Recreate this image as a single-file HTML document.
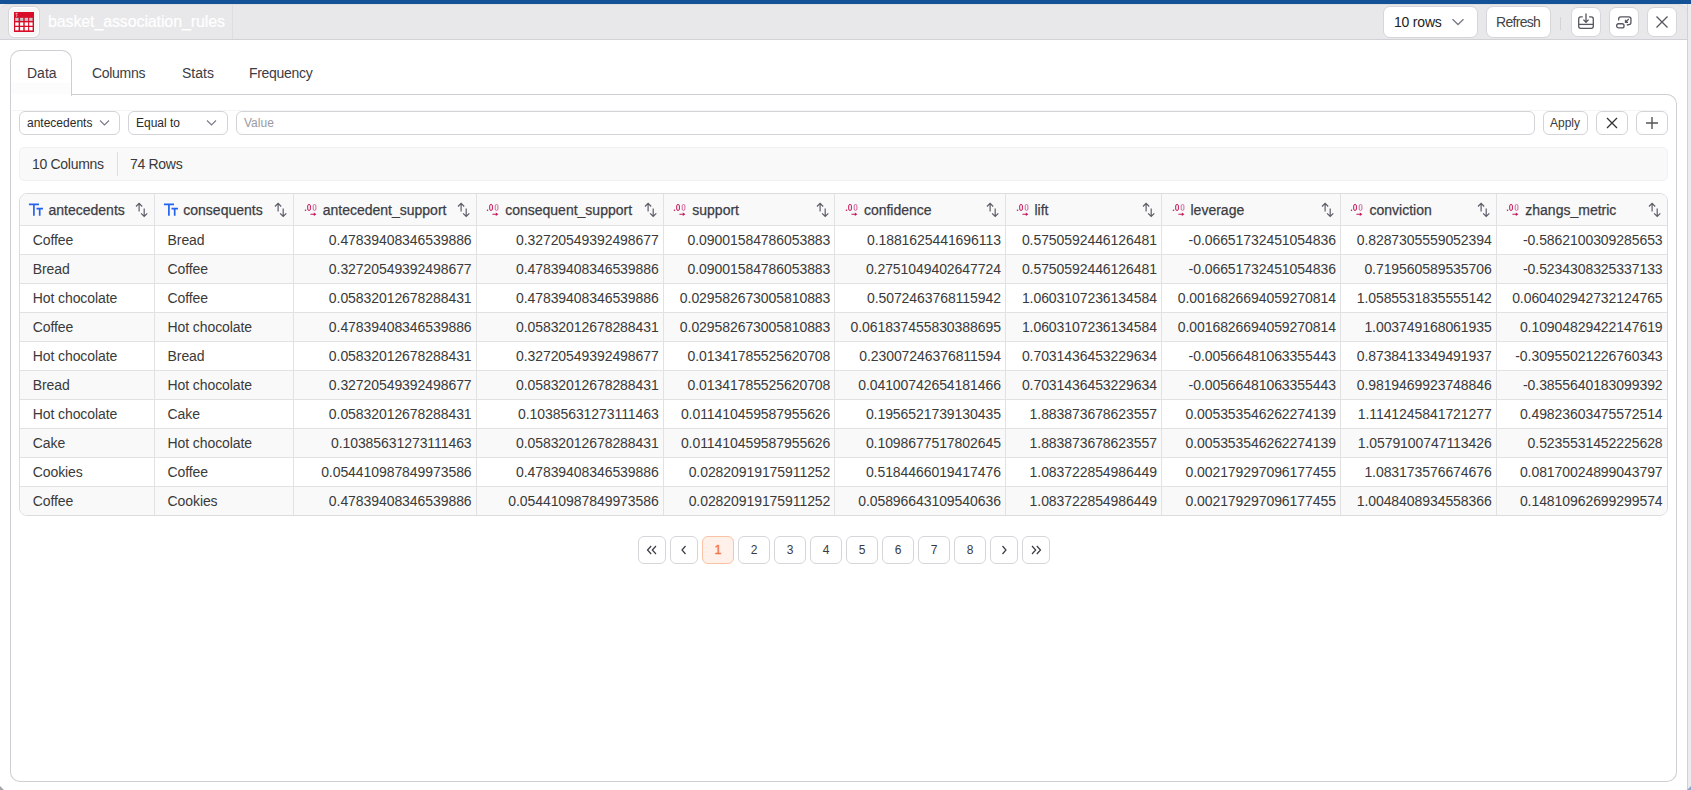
<!DOCTYPE html>
<html><head><meta charset="utf-8">
<style>
*{box-sizing:border-box;margin:0;padding:0}
html,body{width:1691px;height:790px;overflow:hidden;background:#fff;font-family:"Liberation Sans",sans-serif;color:#3a3a3a}
.a{position:absolute}
#blue{left:0;top:0;width:1691px;height:4px;background:#145298}
#strip{left:1687px;top:4px;width:4px;height:786px;background:#ececee;border-left:1px solid #d2d2d6}
#hdr{left:0;top:4px;width:1688px;height:36px;background:#e8e8ea;border:1px solid #e2e2e5;border-top-color:#dedee1;border-left:none;border-bottom:1px solid #d2d2d6;border-radius:8px 10px 0 0}
#corner{left:0;top:4px;width:12px;height:12px;background:#ececee}
#corner2{left:1676px;top:4px;width:15px;height:14px;background:#ececee}
.btn{position:absolute;background:#fff;border:1px solid #d6d6da;border-radius:7px}
.t{position:absolute;white-space:nowrap;line-height:16px}
#panel{left:10px;top:103px;width:1667px;height:679px;border:1px solid #cfcfd3;border-top:none;border-radius:0 0 10px 10px}
#tabline{left:71px;top:94px;width:1606px;height:20px;border-top:1px solid #cfcfd3;border-right:1px solid #cfcfd3;border-radius:0 10px 0 0}
#tab{left:10px;top:50px;width:62px;height:46px;border:1px solid #cfcfd3;border-bottom:none;border-radius:10px 10px 0 0;background:#fff}
.inp{position:absolute;top:111px;height:24px;border:1px solid #d4d4d8;border-radius:6px;background:#fff}
#stats{left:19px;top:147px;width:1649px;height:34px;background:#f9f9f9;border:1px solid #f1f1f2;border-radius:5px}
#tbl{left:19px;top:193px;width:1649px;height:323px;border:1px solid #dcdcdf;border-radius:8px;overflow:hidden}
.row{position:absolute;left:0;width:1647px;height:29px;border-top:1px solid #e2e2e5}
.g{background:#f9f9f9}
.vl{position:absolute;top:0;width:1px;height:321px;background:#e2e2e5}
.c{position:absolute;top:0;height:28px;line-height:28px;font-size:14px;white-space:nowrap;color:#3a3a3a}
.r{text-align:right}
.h{position:absolute;top:8px;font-size:14px;line-height:16px;color:#3c3c44;-webkit-text-stroke:0.25px #3c3c44;white-space:nowrap}
.pg{position:absolute;top:536px;height:28px;border:1px solid #d6d6da;border-radius:6px;font-size:12px;line-height:26px;text-align:center;color:#3a3a3a}
</style></head><body>
<div id="blue" class="a"></div>
<div id="corner" class="a"></div><div id="corner2" class="a"></div>
<div id="hdr" class="a"></div>
<div id="strip" class="a"></div>
<!-- icon box -->
<div class="a" style="left:8px;top:6px;width:32px;height:32px;background:#f7f7f8;border:1px solid #d6d6da;box-shadow:inset 0 0 0 1px #fff;border-radius:6px"></div>
<svg class="a" style="left:14px;top:12px" width="20" height="20" viewBox="0 0 20 20">
<rect x="0" y="0" width="20" height="20" fill="#d90b26"/>
<g fill="#fff"><rect x="1.2" y="10.4" width="3.4" height="3.3"/><rect x="6.1" y="10.4" width="3.2" height="3.3"/><rect x="10.7" y="10.4" width="3.4" height="3.3"/><rect x="15.2" y="10.4" width="3.4" height="3.3"/>
<rect x="1.2" y="15" width="3.4" height="3.4"/><rect x="6.1" y="15" width="3.2" height="3.4"/><rect x="10.7" y="15" width="3.4" height="3.4"/><rect x="15.2" y="15" width="3.4" height="3.4"/></g>
<g fill="#c6c8ca"><rect x="1.2" y="5.8" width="3.4" height="3.1"/><rect x="6.1" y="5.8" width="3.2" height="3.1"/><rect x="10.7" y="5.8" width="3.4" height="3.1"/><rect x="15.2" y="5.8" width="3.4" height="3.1"/></g>
<path d="M1.6 1.3h2.2M2.6 1.3Q1.4 2.6 2.8 3Q3.8 3.6 2 4.6" stroke="#f6c4cc" stroke-width="0.8" fill="none"/>
</svg>
<div class="t" style="left:48px;top:13px;font-size:16px;line-height:18px;color:#fff;letter-spacing:-0.12px;-webkit-text-stroke:0.2px #fff">basket_association_rules</div>
<div class="a" style="left:232px;top:5px;width:1px;height:34px;background:#dedee1"></div>

<!-- right header controls -->
<div class="btn" style="left:1383px;top:6px;width:95px;height:32px"></div>
<div class="t" style="left:1394px;top:14px;font-size:14px;color:#222;letter-spacing:-0.2px">10 rows</div>
<svg class="a" style="left:1451px;top:18px" width="14" height="8" viewBox="0 0 14 8"><path d="M1.5 1.2L7 6.5L12.5 1.2" fill="none" stroke="#7a7a88" stroke-width="1.3"/></svg>
<div class="btn" style="left:1486px;top:6px;width:65px;height:32px"></div>
<div class="t" style="left:1496px;top:14px;font-size:14px;color:#444;letter-spacing:-0.7px">Refresh</div>
<div class="a" style="left:1560px;top:17px;width:1px;height:13px;background:#d4d4d8"></div>
<div class="btn" style="left:1571px;top:7px;width:30px;height:30px"></div>
<svg class="a" style="left:1576px;top:12px" width="20" height="20" viewBox="0 0 20 20"><g fill="none" stroke="#55565f" stroke-width="1.3"><path d="M10 1.5v8.8M7.4 7.6L10 10.3L12.6 7.6"/><path d="M6.7 4.8H4.6Q2.7 4.8 2.7 7v7.3Q2.7 16.4 4.7 16.4h10.6Q17.3 16.4 17.3 14.3V7Q17.3 4.8 15.4 4.8h-2.3"/><path d="M2.7 12.4h14.6"/></g></svg>
<div class="btn" style="left:1609px;top:7px;width:30px;height:30px"></div>
<svg class="a" style="left:1614px;top:12px" width="20" height="20" viewBox="0 0 20 20"><g fill="none" stroke="#55565f" stroke-width="1.3"><path d="M4.65 8.6V7Q4.65 4.85 6.8 4.85h8Q16.95 4.85 16.95 7v3.6Q16.95 12.5 15 12.6l-2.2 .4"/><rect x="2.65" y="11.75" width="7.4" height="4.2" rx="2"/><path d="M14.8 6.9L11.6 10.2M11.5 7.8v2.6h2.6"/></g></svg>
<div class="btn" style="left:1647px;top:7px;width:30px;height:30px"></div>
<svg class="a" style="left:1655px;top:15px" width="14" height="14" viewBox="0 0 14 14"><path d="M1.5 1.5L12.5 12.5M12.5 1.5L1.5 12.5" stroke="#55565f" stroke-width="1.3"/></svg>

<!-- panel & tabs -->
<div id="panel" class="a"></div>
<div class="a" style="left:10px;top:90px;width:1px;height:14px;background:#cfcfd3"></div>
<div id="tabline" class="a"></div>
<div id="tab" class="a"></div>
<div class="a" style="left:11px;top:83px;width:60px;height:11px;background:#fcfcfc"></div>
<div class="a" style="left:11px;top:110px;width:1656px;height:1px;background:#f5f5f6"></div>
<div class="t" style="left:27px;top:65px;font-size:14px;color:#3c3c44">Data</div>
<div class="t" style="left:92px;top:65px;font-size:14px;color:#3c3c44;letter-spacing:-0.3px">Columns</div>
<div class="t" style="left:182px;top:65px;font-size:14px;color:#3c3c44">Stats</div>
<div class="t" style="left:249px;top:65px;font-size:14px;color:#3c3c44;letter-spacing:-0.3px">Frequency</div>

<!-- filter row -->
<div class="inp" style="left:19px;width:101px"></div>
<div class="t" style="left:27px;top:115px;font-size:12px;color:#2a2a2a">antecedents</div>
<svg class="a" style="left:99px;top:119px" width="11" height="8" viewBox="0 0 11 8"><path d="M1 1.5L5.5 6L10 1.5" fill="none" stroke="#7a7a88" stroke-width="1.1"/></svg>
<div class="inp" style="left:128px;width:100px"></div>
<div class="t" style="left:136px;top:115px;font-size:12px;color:#2a2a2a">Equal to</div>
<svg class="a" style="left:206px;top:119px" width="11" height="8" viewBox="0 0 11 8"><path d="M1 1.5L5.5 6L10 1.5" fill="none" stroke="#7a7a88" stroke-width="1.1"/></svg>
<div class="inp" style="left:236px;width:1299px"></div>
<div class="t" style="left:244px;top:115px;font-size:12px;color:#9a9aa2">Value</div>
<div class="inp" style="left:1543px;width:45px"></div>
<div class="t" style="left:1550px;top:115px;font-size:12px;color:#3a3a3a">Apply</div>
<div class="inp" style="left:1596px;width:32px"></div>
<svg class="a" style="left:1606px;top:117px" width="12" height="12" viewBox="0 0 12 12"><path d="M1 1L11 11M11 1L1 11" stroke="#333" stroke-width="1.3"/></svg>
<div class="inp" style="left:1636px;width:32px"></div>
<svg class="a" style="left:1645px;top:116px" width="14" height="14" viewBox="0 0 14 14"><path d="M7 1v12M1 7h12" stroke="#555" stroke-width="1.4"/></svg>

<!-- stats -->
<div id="stats" class="a"></div>
<div class="t" style="left:32px;top:156px;font-size:14px;color:#3a3a3a;letter-spacing:-0.3px">10 Columns</div>
<div class="a" style="left:117px;top:152px;width:1px;height:24px;background:#e0e0e3"></div>
<div class="t" style="left:130px;top:156px;font-size:14px;color:#3a3a3a;letter-spacing:-0.3px">74 Rows</div>

<!-- table -->
<div id="tbl" class="a">
<div class="a g" style="left:0;top:0;width:1647px;height:31px"></div>
<div class="row" style="top:31px"></div>
<div class="row g" style="top:60px"></div>
<div class="row" style="top:89px"></div>
<div class="row g" style="top:118px"></div>
<div class="row" style="top:147px"></div>
<div class="row g" style="top:176px"></div>
<div class="row" style="top:205px"></div>
<div class="row g" style="top:234px"></div>
<div class="row" style="top:263px"></div>
<div class="row g" style="top:292px"></div>
<div class="vl" style="left:134px"></div>
<div class="vl" style="left:273px"></div>
<div class="vl" style="left:456px"></div>
<div class="vl" style="left:643px"></div>
<div class="vl" style="left:814px"></div>
<div class="vl" style="left:985px"></div>
<div class="vl" style="left:1141px"></div>
<div class="vl" style="left:1320px"></div>
<div class="vl" style="left:1476px"></div>
<svg class="a" style="left:8px;top:8px" width="16" height="16" viewBox="0 0 16 16"><path d="M0.9 2.4H11M5.9 2.4V13.8M8.5 6.6H15M11.7 6.6V13.8" stroke="#2462f0" stroke-width="1.7" fill="none"/></svg>
<div class="h" style="left:28.5px">antecedents</div>
<svg class="a" style="left:115px;top:8px" width="14" height="16" viewBox="0 0 14 16"><g fill="none" stroke="#5c5d68" stroke-width="1.2"><path d="M4.1 1.4v8M1 4.5L4.1 1.4L7.2 4.5"/><path d="M9.2 6.4v8M6.1 11.3L9.2 14.4L12.3 11.3"/></g></svg>
<svg class="a" style="left:143px;top:8px" width="16" height="16" viewBox="0 0 16 16"><path d="M0.9 2.4H11M5.9 2.4V13.8M8.5 6.6H15M11.7 6.6V13.8" stroke="#2462f0" stroke-width="1.7" fill="none"/></svg>
<div class="h" style="left:163.3px">consequents</div>
<svg class="a" style="left:254px;top:8px" width="14" height="16" viewBox="0 0 14 16"><g fill="none" stroke="#5c5d68" stroke-width="1.2"><path d="M4.1 1.4v8M1 4.5L4.1 1.4L7.2 4.5"/><path d="M9.2 6.4v8M6.1 11.3L9.2 14.4L12.3 11.3"/></g></svg>
<svg class="a" style="left:284px;top:8px" width="14" height="16" viewBox="0 0 14 16"><circle cx="1.5" cy="8.2" r="0.8" fill="#c2185b"/><rect x="3.7" y="2.5" width="2.7" height="5.9" rx="1.35" fill="none" stroke="#c2185b" stroke-width="1"/><rect x="9.2" y="2.5" width="2.7" height="5.9" rx="1.35" fill="none" stroke="#d2669a" stroke-width="1"/><path d="M6.4 12.3h4" stroke="#c2185b" stroke-width="1.1"/><path d="M9.8 10.5L12.4 12.3L9.8 14.1z" fill="#c2185b"/></svg>
<div class="h" style="left:302.7px">antecedent_support</div>
<svg class="a" style="left:437px;top:8px" width="14" height="16" viewBox="0 0 14 16"><g fill="none" stroke="#5c5d68" stroke-width="1.2"><path d="M4.1 1.4v8M1 4.5L4.1 1.4L7.2 4.5"/><path d="M9.2 6.4v8M6.1 11.3L9.2 14.4L12.3 11.3"/></g></svg>
<svg class="a" style="left:466px;top:8px" width="14" height="16" viewBox="0 0 14 16"><circle cx="1.5" cy="8.2" r="0.8" fill="#c2185b"/><rect x="3.7" y="2.5" width="2.7" height="5.9" rx="1.35" fill="none" stroke="#c2185b" stroke-width="1"/><rect x="9.2" y="2.5" width="2.7" height="5.9" rx="1.35" fill="none" stroke="#d2669a" stroke-width="1"/><path d="M6.4 12.3h4" stroke="#c2185b" stroke-width="1.1"/><path d="M9.8 10.5L12.4 12.3L9.8 14.1z" fill="#c2185b"/></svg>
<div class="h" style="left:485.2px">consequent_support</div>
<svg class="a" style="left:624px;top:8px" width="14" height="16" viewBox="0 0 14 16"><g fill="none" stroke="#5c5d68" stroke-width="1.2"><path d="M4.1 1.4v8M1 4.5L4.1 1.4L7.2 4.5"/><path d="M9.2 6.4v8M6.1 11.3L9.2 14.4L12.3 11.3"/></g></svg>
<svg class="a" style="left:653px;top:8px" width="14" height="16" viewBox="0 0 14 16"><circle cx="1.5" cy="8.2" r="0.8" fill="#c2185b"/><rect x="3.7" y="2.5" width="2.7" height="5.9" rx="1.35" fill="none" stroke="#c2185b" stroke-width="1"/><rect x="9.2" y="2.5" width="2.7" height="5.9" rx="1.35" fill="none" stroke="#d2669a" stroke-width="1"/><path d="M6.4 12.3h4" stroke="#c2185b" stroke-width="1.1"/><path d="M9.8 10.5L12.4 12.3L9.8 14.1z" fill="#c2185b"/></svg>
<div class="h" style="left:672.3px">support</div>
<svg class="a" style="left:796px;top:8px" width="14" height="16" viewBox="0 0 14 16"><g fill="none" stroke="#5c5d68" stroke-width="1.2"><path d="M4.1 1.4v8M1 4.5L4.1 1.4L7.2 4.5"/><path d="M9.2 6.4v8M6.1 11.3L9.2 14.4L12.3 11.3"/></g></svg>
<svg class="a" style="left:825px;top:8px" width="14" height="16" viewBox="0 0 14 16"><circle cx="1.5" cy="8.2" r="0.8" fill="#c2185b"/><rect x="3.7" y="2.5" width="2.7" height="5.9" rx="1.35" fill="none" stroke="#c2185b" stroke-width="1"/><rect x="9.2" y="2.5" width="2.7" height="5.9" rx="1.35" fill="none" stroke="#d2669a" stroke-width="1"/><path d="M6.4 12.3h4" stroke="#c2185b" stroke-width="1.1"/><path d="M9.8 10.5L12.4 12.3L9.8 14.1z" fill="#c2185b"/></svg>
<div class="h" style="left:843.9px">confidence</div>
<svg class="a" style="left:966px;top:8px" width="14" height="16" viewBox="0 0 14 16"><g fill="none" stroke="#5c5d68" stroke-width="1.2"><path d="M4.1 1.4v8M1 4.5L4.1 1.4L7.2 4.5"/><path d="M9.2 6.4v8M6.1 11.3L9.2 14.4L12.3 11.3"/></g></svg>
<svg class="a" style="left:996px;top:8px" width="14" height="16" viewBox="0 0 14 16"><circle cx="1.5" cy="8.2" r="0.8" fill="#c2185b"/><rect x="3.7" y="2.5" width="2.7" height="5.9" rx="1.35" fill="none" stroke="#c2185b" stroke-width="1"/><rect x="9.2" y="2.5" width="2.7" height="5.9" rx="1.35" fill="none" stroke="#d2669a" stroke-width="1"/><path d="M6.4 12.3h4" stroke="#c2185b" stroke-width="1.1"/><path d="M9.8 10.5L12.4 12.3L9.8 14.1z" fill="#c2185b"/></svg>
<div class="h" style="left:1014.5px">lift</div>
<svg class="a" style="left:1122px;top:8px" width="14" height="16" viewBox="0 0 14 16"><g fill="none" stroke="#5c5d68" stroke-width="1.2"><path d="M4.1 1.4v8M1 4.5L4.1 1.4L7.2 4.5"/><path d="M9.2 6.4v8M6.1 11.3L9.2 14.4L12.3 11.3"/></g></svg>
<svg class="a" style="left:1152px;top:8px" width="14" height="16" viewBox="0 0 14 16"><circle cx="1.5" cy="8.2" r="0.8" fill="#c2185b"/><rect x="3.7" y="2.5" width="2.7" height="5.9" rx="1.35" fill="none" stroke="#c2185b" stroke-width="1"/><rect x="9.2" y="2.5" width="2.7" height="5.9" rx="1.35" fill="none" stroke="#d2669a" stroke-width="1"/><path d="M6.4 12.3h4" stroke="#c2185b" stroke-width="1.1"/><path d="M9.8 10.5L12.4 12.3L9.8 14.1z" fill="#c2185b"/></svg>
<div class="h" style="left:1170.5px">leverage</div>
<svg class="a" style="left:1301px;top:8px" width="14" height="16" viewBox="0 0 14 16"><g fill="none" stroke="#5c5d68" stroke-width="1.2"><path d="M4.1 1.4v8M1 4.5L4.1 1.4L7.2 4.5"/><path d="M9.2 6.4v8M6.1 11.3L9.2 14.4L12.3 11.3"/></g></svg>
<svg class="a" style="left:1330px;top:8px" width="14" height="16" viewBox="0 0 14 16"><circle cx="1.5" cy="8.2" r="0.8" fill="#c2185b"/><rect x="3.7" y="2.5" width="2.7" height="5.9" rx="1.35" fill="none" stroke="#c2185b" stroke-width="1"/><rect x="9.2" y="2.5" width="2.7" height="5.9" rx="1.35" fill="none" stroke="#d2669a" stroke-width="1"/><path d="M6.4 12.3h4" stroke="#c2185b" stroke-width="1.1"/><path d="M9.8 10.5L12.4 12.3L9.8 14.1z" fill="#c2185b"/></svg>
<div class="h" style="left:1349.5px">conviction</div>
<svg class="a" style="left:1457px;top:8px" width="14" height="16" viewBox="0 0 14 16"><g fill="none" stroke="#5c5d68" stroke-width="1.2"><path d="M4.1 1.4v8M1 4.5L4.1 1.4L7.2 4.5"/><path d="M9.2 6.4v8M6.1 11.3L9.2 14.4L12.3 11.3"/></g></svg>
<svg class="a" style="left:1486px;top:8px" width="14" height="16" viewBox="0 0 14 16"><circle cx="1.5" cy="8.2" r="0.8" fill="#c2185b"/><rect x="3.7" y="2.5" width="2.7" height="5.9" rx="1.35" fill="none" stroke="#c2185b" stroke-width="1"/><rect x="9.2" y="2.5" width="2.7" height="5.9" rx="1.35" fill="none" stroke="#d2669a" stroke-width="1"/><path d="M6.4 12.3h4" stroke="#c2185b" stroke-width="1.1"/><path d="M9.8 10.5L12.4 12.3L9.8 14.1z" fill="#c2185b"/></svg>
<div class="h" style="left:1505.3px">zhangs_metric</div>
<svg class="a" style="left:1628px;top:8px" width="14" height="16" viewBox="0 0 14 16"><g fill="none" stroke="#5c5d68" stroke-width="1.2"><path d="M4.1 1.4v8M1 4.5L4.1 1.4L7.2 4.5"/><path d="M9.2 6.4v8M6.1 11.3L9.2 14.4L12.3 11.3"/></g></svg>
<div class="c" style="left:12.8px;top:32px;letter-spacing:-0.1px">Coffee</div>
<div class="c" style="left:147.6px;top:32px;letter-spacing:-0.1px">Bread</div>
<div class="c r" style="left:273.7px;width:177.9px;top:32px;letter-spacing:-0.07px">0.47839408346539886</div>
<div class="c r" style="left:456.2px;width:182.5px;top:32px;letter-spacing:-0.07px">0.32720549392498677</div>
<div class="c r" style="left:643.3px;width:167.0px;top:32px;letter-spacing:-0.07px">0.09001584786053883</div>
<div class="c r" style="left:814.9px;width:166.0px;top:32px;letter-spacing:-0.07px">0.1881625441696113</div>
<div class="c r" style="left:985.5px;width:151.4px;top:32px;letter-spacing:-0.07px">0.5750592446126481</div>
<div class="c r" style="left:1141.5px;width:174.4px;top:32px;letter-spacing:-0.07px">-0.06651732451054836</div>
<div class="c r" style="left:1320.5px;width:151.2px;top:32px;letter-spacing:-0.07px">0.8287305559052394</div>
<div class="c r" style="left:1476.3px;width:166.3px;top:32px;letter-spacing:-0.07px">-0.5862100309285653</div>
<div class="c" style="left:12.8px;top:61px;letter-spacing:-0.1px">Bread</div>
<div class="c" style="left:147.6px;top:61px;letter-spacing:-0.1px">Coffee</div>
<div class="c r" style="left:273.7px;width:177.9px;top:61px;letter-spacing:-0.07px">0.32720549392498677</div>
<div class="c r" style="left:456.2px;width:182.5px;top:61px;letter-spacing:-0.07px">0.47839408346539886</div>
<div class="c r" style="left:643.3px;width:167.0px;top:61px;letter-spacing:-0.07px">0.09001584786053883</div>
<div class="c r" style="left:814.9px;width:166.0px;top:61px;letter-spacing:-0.07px">0.2751049402647724</div>
<div class="c r" style="left:985.5px;width:151.4px;top:61px;letter-spacing:-0.07px">0.5750592446126481</div>
<div class="c r" style="left:1141.5px;width:174.4px;top:61px;letter-spacing:-0.07px">-0.06651732451054836</div>
<div class="c r" style="left:1320.5px;width:151.2px;top:61px;letter-spacing:-0.07px">0.719560589535706</div>
<div class="c r" style="left:1476.3px;width:166.3px;top:61px;letter-spacing:-0.07px">-0.5234308325337133</div>
<div class="c" style="left:12.8px;top:90px;letter-spacing:-0.1px">Hot chocolate</div>
<div class="c" style="left:147.6px;top:90px;letter-spacing:-0.1px">Coffee</div>
<div class="c r" style="left:273.7px;width:177.9px;top:90px;letter-spacing:-0.07px">0.05832012678288431</div>
<div class="c r" style="left:456.2px;width:182.5px;top:90px;letter-spacing:-0.07px">0.47839408346539886</div>
<div class="c r" style="left:643.3px;width:167.0px;top:90px;letter-spacing:-0.07px">0.029582673005810883</div>
<div class="c r" style="left:814.9px;width:166.0px;top:90px;letter-spacing:-0.07px">0.5072463768115942</div>
<div class="c r" style="left:985.5px;width:151.4px;top:90px;letter-spacing:-0.07px">1.0603107236134584</div>
<div class="c r" style="left:1141.5px;width:174.4px;top:90px;letter-spacing:-0.07px">0.0016826694059270814</div>
<div class="c r" style="left:1320.5px;width:151.2px;top:90px;letter-spacing:-0.07px">1.0585531835555142</div>
<div class="c r" style="left:1476.3px;width:166.3px;top:90px;letter-spacing:-0.07px">0.060402942732124765</div>
<div class="c" style="left:12.8px;top:119px;letter-spacing:-0.1px">Coffee</div>
<div class="c" style="left:147.6px;top:119px;letter-spacing:-0.1px">Hot chocolate</div>
<div class="c r" style="left:273.7px;width:177.9px;top:119px;letter-spacing:-0.07px">0.47839408346539886</div>
<div class="c r" style="left:456.2px;width:182.5px;top:119px;letter-spacing:-0.07px">0.05832012678288431</div>
<div class="c r" style="left:643.3px;width:167.0px;top:119px;letter-spacing:-0.07px">0.029582673005810883</div>
<div class="c r" style="left:814.9px;width:166.0px;top:119px;letter-spacing:-0.07px">0.061837455830388695</div>
<div class="c r" style="left:985.5px;width:151.4px;top:119px;letter-spacing:-0.07px">1.0603107236134584</div>
<div class="c r" style="left:1141.5px;width:174.4px;top:119px;letter-spacing:-0.07px">0.0016826694059270814</div>
<div class="c r" style="left:1320.5px;width:151.2px;top:119px;letter-spacing:-0.07px">1.003749168061935</div>
<div class="c r" style="left:1476.3px;width:166.3px;top:119px;letter-spacing:-0.07px">0.10904829422147619</div>
<div class="c" style="left:12.8px;top:148px;letter-spacing:-0.1px">Hot chocolate</div>
<div class="c" style="left:147.6px;top:148px;letter-spacing:-0.1px">Bread</div>
<div class="c r" style="left:273.7px;width:177.9px;top:148px;letter-spacing:-0.07px">0.05832012678288431</div>
<div class="c r" style="left:456.2px;width:182.5px;top:148px;letter-spacing:-0.07px">0.32720549392498677</div>
<div class="c r" style="left:643.3px;width:167.0px;top:148px;letter-spacing:-0.07px">0.01341785525620708</div>
<div class="c r" style="left:814.9px;width:166.0px;top:148px;letter-spacing:-0.07px">0.23007246376811594</div>
<div class="c r" style="left:985.5px;width:151.4px;top:148px;letter-spacing:-0.07px">0.7031436453229634</div>
<div class="c r" style="left:1141.5px;width:174.4px;top:148px;letter-spacing:-0.07px">-0.00566481063355443</div>
<div class="c r" style="left:1320.5px;width:151.2px;top:148px;letter-spacing:-0.07px">0.8738413349491937</div>
<div class="c r" style="left:1476.3px;width:166.3px;top:148px;letter-spacing:-0.07px">-0.30955021226760343</div>
<div class="c" style="left:12.8px;top:177px;letter-spacing:-0.1px">Bread</div>
<div class="c" style="left:147.6px;top:177px;letter-spacing:-0.1px">Hot chocolate</div>
<div class="c r" style="left:273.7px;width:177.9px;top:177px;letter-spacing:-0.07px">0.32720549392498677</div>
<div class="c r" style="left:456.2px;width:182.5px;top:177px;letter-spacing:-0.07px">0.05832012678288431</div>
<div class="c r" style="left:643.3px;width:167.0px;top:177px;letter-spacing:-0.07px">0.01341785525620708</div>
<div class="c r" style="left:814.9px;width:166.0px;top:177px;letter-spacing:-0.07px">0.04100742654181466</div>
<div class="c r" style="left:985.5px;width:151.4px;top:177px;letter-spacing:-0.07px">0.7031436453229634</div>
<div class="c r" style="left:1141.5px;width:174.4px;top:177px;letter-spacing:-0.07px">-0.00566481063355443</div>
<div class="c r" style="left:1320.5px;width:151.2px;top:177px;letter-spacing:-0.07px">0.9819469923748846</div>
<div class="c r" style="left:1476.3px;width:166.3px;top:177px;letter-spacing:-0.07px">-0.3855640183099392</div>
<div class="c" style="left:12.8px;top:206px;letter-spacing:-0.1px">Hot chocolate</div>
<div class="c" style="left:147.6px;top:206px;letter-spacing:-0.1px">Cake</div>
<div class="c r" style="left:273.7px;width:177.9px;top:206px;letter-spacing:-0.07px">0.05832012678288431</div>
<div class="c r" style="left:456.2px;width:182.5px;top:206px;letter-spacing:-0.07px">0.10385631273111463</div>
<div class="c r" style="left:643.3px;width:167.0px;top:206px;letter-spacing:-0.07px">0.011410459587955626</div>
<div class="c r" style="left:814.9px;width:166.0px;top:206px;letter-spacing:-0.07px">0.1956521739130435</div>
<div class="c r" style="left:985.5px;width:151.4px;top:206px;letter-spacing:-0.07px">1.883873678623557</div>
<div class="c r" style="left:1141.5px;width:174.4px;top:206px;letter-spacing:-0.07px">0.005353546262274139</div>
<div class="c r" style="left:1320.5px;width:151.2px;top:206px;letter-spacing:-0.07px">1.1141245841721277</div>
<div class="c r" style="left:1476.3px;width:166.3px;top:206px;letter-spacing:-0.07px">0.49823603475572514</div>
<div class="c" style="left:12.8px;top:235px;letter-spacing:-0.1px">Cake</div>
<div class="c" style="left:147.6px;top:235px;letter-spacing:-0.1px">Hot chocolate</div>
<div class="c r" style="left:273.7px;width:177.9px;top:235px;letter-spacing:-0.07px">0.10385631273111463</div>
<div class="c r" style="left:456.2px;width:182.5px;top:235px;letter-spacing:-0.07px">0.05832012678288431</div>
<div class="c r" style="left:643.3px;width:167.0px;top:235px;letter-spacing:-0.07px">0.011410459587955626</div>
<div class="c r" style="left:814.9px;width:166.0px;top:235px;letter-spacing:-0.07px">0.1098677517802645</div>
<div class="c r" style="left:985.5px;width:151.4px;top:235px;letter-spacing:-0.07px">1.883873678623557</div>
<div class="c r" style="left:1141.5px;width:174.4px;top:235px;letter-spacing:-0.07px">0.005353546262274139</div>
<div class="c r" style="left:1320.5px;width:151.2px;top:235px;letter-spacing:-0.07px">1.0579100747113426</div>
<div class="c r" style="left:1476.3px;width:166.3px;top:235px;letter-spacing:-0.07px">0.5235531452225628</div>
<div class="c" style="left:12.8px;top:264px;letter-spacing:-0.1px">Cookies</div>
<div class="c" style="left:147.6px;top:264px;letter-spacing:-0.1px">Coffee</div>
<div class="c r" style="left:273.7px;width:177.9px;top:264px;letter-spacing:-0.07px">0.054410987849973586</div>
<div class="c r" style="left:456.2px;width:182.5px;top:264px;letter-spacing:-0.07px">0.47839408346539886</div>
<div class="c r" style="left:643.3px;width:167.0px;top:264px;letter-spacing:-0.07px">0.02820919175911252</div>
<div class="c r" style="left:814.9px;width:166.0px;top:264px;letter-spacing:-0.07px">0.5184466019417476</div>
<div class="c r" style="left:985.5px;width:151.4px;top:264px;letter-spacing:-0.07px">1.083722854986449</div>
<div class="c r" style="left:1141.5px;width:174.4px;top:264px;letter-spacing:-0.07px">0.002179297096177455</div>
<div class="c r" style="left:1320.5px;width:151.2px;top:264px;letter-spacing:-0.07px">1.083173576674676</div>
<div class="c r" style="left:1476.3px;width:166.3px;top:264px;letter-spacing:-0.07px">0.08170024899043797</div>
<div class="c" style="left:12.8px;top:293px;letter-spacing:-0.1px">Coffee</div>
<div class="c" style="left:147.6px;top:293px;letter-spacing:-0.1px">Cookies</div>
<div class="c r" style="left:273.7px;width:177.9px;top:293px;letter-spacing:-0.07px">0.47839408346539886</div>
<div class="c r" style="left:456.2px;width:182.5px;top:293px;letter-spacing:-0.07px">0.054410987849973586</div>
<div class="c r" style="left:643.3px;width:167.0px;top:293px;letter-spacing:-0.07px">0.02820919175911252</div>
<div class="c r" style="left:814.9px;width:166.0px;top:293px;letter-spacing:-0.07px">0.05896643109540636</div>
<div class="c r" style="left:985.5px;width:151.4px;top:293px;letter-spacing:-0.07px">1.083722854986449</div>
<div class="c r" style="left:1141.5px;width:174.4px;top:293px;letter-spacing:-0.07px">0.002179297096177455</div>
<div class="c r" style="left:1320.5px;width:151.2px;top:293px;letter-spacing:-0.07px">1.0048408934558366</div>
<div class="c r" style="left:1476.3px;width:166.3px;top:293px;letter-spacing:-0.07px">0.14810962699299574</div>
</div>

<!-- pagination -->
<div class="pg" style="left:638px;width:28px;"><svg width="12" height="10" viewBox="0 0 12 10" style="margin-top:8px"><path d="M5.2 1L1.5 5L5.2 9M10 1L6.3 5L10 9" fill="none" stroke="#3a3a44" stroke-width="1.2"/></svg></div>
<div class="pg" style="left:670px;width:28px;"><svg width="8" height="10" viewBox="0 0 8 10" style="margin-top:8px"><path d="M5.5 1L2 5L5.5 9" fill="none" stroke="#3a3a44" stroke-width="1.2"/></svg></div>
<div class="pg" style="left:702px;width:32px;background:#fff0e9;border-color:#fbc3a3;color:#f5773a;-webkit-text-stroke:0.4px #f5773a;">1</div>
<div class="pg" style="left:738px;width:32px;">2</div>
<div class="pg" style="left:774px;width:32px;">3</div>
<div class="pg" style="left:810px;width:32px;">4</div>
<div class="pg" style="left:846px;width:32px;">5</div>
<div class="pg" style="left:882px;width:32px;">6</div>
<div class="pg" style="left:918px;width:32px;">7</div>
<div class="pg" style="left:954px;width:32px;">8</div>
<div class="pg" style="left:990px;width:28px;"><svg width="8" height="10" viewBox="0 0 8 10" style="margin-top:8px"><path d="M2.5 1L6 5L2.5 9" fill="none" stroke="#3a3a44" stroke-width="1.2"/></svg></div>
<div class="pg" style="left:1022px;width:28px;"><svg width="12" height="10" viewBox="0 0 12 10" style="margin-top:8px"><path d="M2 1L5.7 5L2 9M6.8 1L10.5 5L6.8 9" fill="none" stroke="#3a3a44" stroke-width="1.2"/></svg></div>
<svg class="a" style="left:0;top:786px" width="4" height="4" viewBox="0 0 4 4"><path d="M0 0L4 4H0z" fill="#a4a4aa"/></svg>
<svg class="a" style="left:1687px;top:786px" width="4" height="4" viewBox="0 0 4 4"><path d="M4 0V4H0z" fill="#90a6c4"/></svg>
</body></html>
